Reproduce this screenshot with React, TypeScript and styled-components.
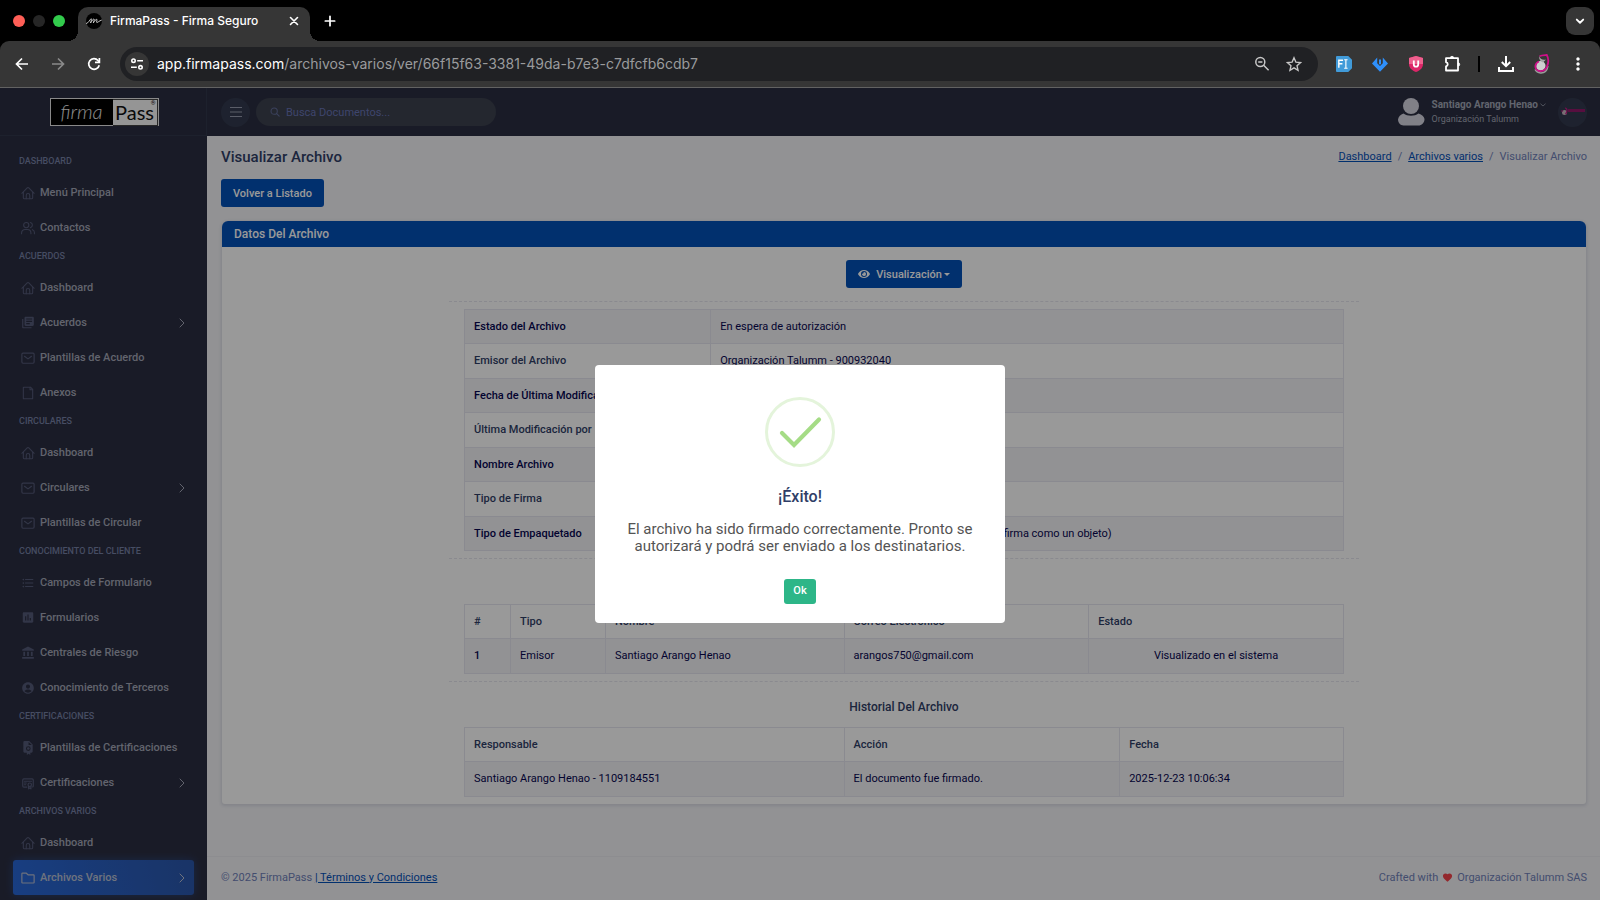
import React from 'react';
import styled, { createGlobalStyle } from 'styled-components';
import {
  MdAccountBalance,
  MdAccountCircle,
  MdAssessment,
  MdFavorite,
  MdFormatListBulleted,
  MdLibraryBooks,
  MdMoreVert,
} from 'react-icons/md';
import { FaEye } from 'react-icons/fa';
import { TbCertificate } from 'react-icons/tb';

const GlobalStyle = createGlobalStyle`
  *, *::before, *::after { box-sizing: border-box; }
  body { margin: 0; background: #000; }
  #root { font-family: Roboto, "Liberation Sans", sans-serif; }
  button, input { font: inherit; }
  button { cursor: pointer; }
`;

/* ---------- stroke icons ---------- */

type StrokeProps = { size?: number; width?: number; children: React.ReactNode };

const Stroke = ({ size = 14, width = 1.5, children }: StrokeProps) => (
  <svg
    width={size}
    height={size}
    viewBox="0 0 24 24"
    fill="none"
    stroke="currentColor"
    strokeWidth={width}
    strokeLinecap="round"
    strokeLinejoin="round"
    aria-hidden="true"
  >
    {children}
  </svg>
);

const HomeIcon = () => (
  <Stroke width={1.8}>
    <path d="M1.5 12.5L10.6 3.4a2 2 0 012.8 0l9.1 9.1" />
    <path d="M4 10.5V20a2 2 0 002 2h12a2 2 0 002-2v-9.500" />
    <path d="M9 22v-6a3 3 0 016 0v6" />
  </Stroke>
);
const UsersIcon = () => (
  <Stroke width={1.8}>
    <circle cx="9" cy="7" r="4.500" />
    <path d="M1 22v-1.500a6 6 0 016-6h4a6 6 0 016 6V22" />
    <path d="M16 2.600a4.500 4.500 0 010 8.800M19.500 14.800a5 5 0 013.500 4.800V22" />
  </Stroke>
);
const MailIcon = () => (
  <Stroke width={2}>
    <rect x="1.500" y="3.500" width="21" height="17.500" rx="2" />
    <path d="M6 9l6 4.500L18 9" />
  </Stroke>
);
const PageIcon = () => (
  <Stroke width={1.8}>
    <path d="M4 21.400V2.600A.6.600 0 014.600 2h11.700L20 5.800v15.600a.6.600 0 01-.6.600H4.600a.6.600 0 01-.6-.6z" />
    <path d="M15.500 2v4.500H20" />
  </Stroke>
);
const FolderIcon = () => (
  <Stroke width={2}>
    <path d="M1.500 19.500v-15a1 1 0 011-1h6.200L12 6.500h9.500a1 1 0 011 1v12a1 1 0 01-1 1h-19a1 1 0 01-1-1z" />
  </Stroke>
);
const CertFileIcon = () => (
  <svg width="14" height="14" viewBox="0 0 24 24" fill="currentColor" aria-hidden="true">
    <path
      fillRule="evenodd"
      d="M6 0h8l6 6v12a2 2 0 01-2 2h-2v4l-3-2-3 2v-4H6a2 2 0 01-2-2V2a2 2 0 012-2zm7 1.500V7h5.500zM12.500 9a4 4 0 100 8 4 4 0 000-8z"
    />
    <circle cx="12.500" cy="13" r="2.200" />
  </svg>
);
const ChevronRight = () => (
  <Stroke size={12} width={2}>
    <path d="M8 4l8 8-8 8" />
  </Stroke>
);

/* ---------- browser chrome ---------- */

const Window = styled.div`
  min-height: 100vh;
  display: flex;
  flex-direction: column;
  background: #000;
`;

const TabStrip = styled.div`
  height: 41px;
  display: flex;
  align-items: flex-end;
  padding: 0 6px 0 13px;
`;

const Lights = styled.div`
  display: flex;
  gap: 8px;
  height: 41px;
  align-items: center;
  margin-right: 13px;
`;

const Light = styled.span<{ $color: string }>`
  width: 12px;
  height: 12px;
  border-radius: 50%;
  background: ${(p) => p.$color};
`;

const Tab = styled.div`
  position: relative;
  width: 232px;
  height: 34px;
  display: flex;
  align-items: center;
  padding: 0 8px 6px 8px;
  border-radius: 10px 10px 0 0;
  background: #363636;
  color: #fff;
  font: 500 12px/16px Inter, "Liberation Sans", sans-serif;

  &::before,
  &::after {
    content: '';
    position: absolute;
    bottom: 0;
    width: 10px;
    height: 10px;
  }
  &::before {
    right: 100%;
    background: radial-gradient(circle at 0 0, transparent 10px, #363636 10px);
  }
  &::after {
    left: 100%;
    background: radial-gradient(circle at 100% 0, transparent 10px, #363636 10px);
  }
`;

const TabTitle = styled.span`
  flex: 1;
  margin-left: 8px;
  white-space: nowrap;
`;

const PlainButton = styled.button`
  display: inline-flex;
  align-items: center;
  justify-content: center;
  width: 28px;
  height: 28px;
  padding: 0;
  border: 0;
  background: transparent;
  color: #fff;
`;

const CloseTab = styled(PlainButton)`
  width: 16px;
  height: 16px;
`;

const NewTab = styled(PlainButton)`
  margin: 0 auto 6px 6px;
`;

const TabSearch = styled(PlainButton)`
  margin-bottom: 6px;
  border-radius: 9px;
  background: #363636;
`;

const Toolbar = styled.div`
  height: 47px;
  display: flex;
  align-items: center;
  padding: 0 8px 0 8px;
  background: #363636;
  border-bottom: 1px solid #626262;
  border-radius: 9px 9px 0 0;
`;

const NavButton = styled(PlainButton)<{ $dim?: boolean }>`
  margin-right: 8px;
  color: ${(p) => (p.$dim ? '#8a8a8a' : '#fff')};
`;

const Omnibox = styled.div`
  flex: 1;
  display: flex;
  align-items: center;
  height: 34px;
  margin: 0 12px 0 4px;
  padding: 0 10px 0 5px;
  border-radius: 17px;
  background: #202124;
`;

const SiteInfo = styled(PlainButton)`
  width: 24px;
  height: 24px;
  border-radius: 12px;
  background: #363636;
`;

const Url = styled.div`
  flex: 1;
  margin-left: 8px;
  color: #9a9b9d;
  font: 400 14px/20px Inter, "Liberation Sans", sans-serif;
  white-space: nowrap;

  b {
    color: #fff;
    font-weight: 400;
  }
`;

const OmniButton = styled(PlainButton)`
  margin-left: 4px;
  color: #c7c7c7;
`;

const Extensions = styled.div`
  display: flex;
  align-items: center;
  gap: 8px;
`;

const Divider = styled.span`
  width: 2px;
  height: 16px;
  margin: 0 4px;
  background: #000;
`;

const BrowserChrome = () => (
  <>
    <TabStrip>
      <Lights>
        <Light $color="#ff5f57" />
        <Light $color="#262626" />
        <Light $color="#32cb4c" />
      </Lights>
      <Tab>
        <svg width="16" height="16" viewBox="0 0 16 16" aria-hidden="true">
          <circle cx="8" cy="8" r="8" fill="#000" />
          <path
            d="M.5 10.500C2.500 10 4 6.500 5 5.800c1-.4 0 3.200-.5 4.200 1-2 2.700-4.200 3.500-4 .8.200-.5 3-.6 3.800C8.500 8 10 6 10.800 6.300c.8.400-.8 2.900 0 3.200.8.200 2.600-1.800 4.500-2.300"
            fill="none"
            stroke="#ddd"
            strokeWidth=".9"
            strokeLinecap="round"
          />
        </svg>
        <TabTitle>FirmaPass - Firma Seguro</TabTitle>
        <CloseTab aria-label="Cerrar pestaña">
          <Stroke size={14} width={2.8}>
            <path d="M6 6l12 12M18 6L6 18" />
          </Stroke>
        </CloseTab>
      </Tab>
      <NewTab aria-label="Nueva pestaña">
        <Stroke size={16} width={2.600}>
          <path d="M12 5v14M5 12h14" />
        </Stroke>
      </NewTab>
      <TabSearch aria-label="Buscar pestañas">
        <Stroke size={14} width={3.200}>
          <path d="M6.500 9.500l5.500 5.500 5.500-5.500" />
        </Stroke>
      </TabSearch>
    </TabStrip>
    <Toolbar>
      <NavButton aria-label="Atrás">
        <svg width="16" height="16" viewBox="0 0 16 16" fill="none" stroke="currentColor" strokeWidth="1.700" aria-hidden="true">
          <path d="M14 8H3M8 2.500L2.500 8 8 13.500" />
        </svg>
      </NavButton>
      <NavButton aria-label="Adelante" $dim>
        <svg width="16" height="16" viewBox="0 0 16 16" fill="none" stroke="currentColor" strokeWidth="1.700" aria-hidden="true">
          <path d="M2 8h11M8 2.500L13.500 8 8 13.500" />
        </svg>
      </NavButton>
      <NavButton aria-label="Recargar">
        <svg width="16" height="16" viewBox="0 0 16 16" fill="none" stroke="currentColor" strokeWidth="1.700" aria-hidden="true">
          <path d="M13.200 9.200A5.300 5.300 0 1112 4.500L13.500 6" />
          <path d="M13.400 2v4.400H9" />
        </svg>
      </NavButton>
      <Omnibox>
        <SiteInfo aria-label="Información del sitio">
          <svg width="14" height="14" viewBox="0 0 14 14" fill="none" stroke="#fff" strokeWidth="1.600" aria-hidden="true">
            <circle cx="3.500" cy="3.700" r="1.700" />
            <path d="M7.200 3.700H13M1 10.300h5.800" />
            <circle cx="10.500" cy="10.300" r="1.700" />
          </svg>
        </SiteInfo>
        <Url>
          <b>app.firmapass.com</b>/archivos-varios/ver/66f15f63-3381-49da-b7e3-c7dfcfb6cdb7
        </Url>
        <OmniButton aria-label="Zoom">
          <svg width="16" height="16" viewBox="0 0 16 16" fill="none" stroke="currentColor" strokeWidth="1.500" aria-hidden="true">
            <circle cx="6.300" cy="6" r="4.500" />
            <path d="M9.600 9.300l5 5M4.200 6h4.200" />
          </svg>
        </OmniButton>
        <OmniButton aria-label="Añadir a favoritos">
          <svg width="16" height="16" viewBox="0 0 24 24" fill="none" stroke="currentColor" strokeWidth="2" aria-hidden="true">
            <path d="M12 2.600l2.800 6.600 7.100.6-5.400 4.700 1.600 7L12 17.800l-6.100 3.700 1.600-7L2.100 9.800l7.100-.6z" />
          </svg>
        </OmniButton>
      </Omnibox>
      <Extensions>
        <PlainButton aria-label="Extensión de fuentes">
          <svg width="16" height="16" viewBox="0 0 17 17" aria-hidden="true">
            <path d="M1 0h12l4 4v9l-4 4H1a1 1 0 01-1-1V1a1 1 0 011-1z" fill="#419bd9" />
            <path d="M3 12.500v-8h4.500M3 8.300h3.800" fill="none" stroke="#fff" strokeWidth="1.500" />
            <path d="M8.700 4h3.600M8.700 13h3.600M10.500 4v9" fill="none" stroke="#fff" strokeWidth="1.200" />
          </svg>
        </PlainButton>
        <PlainButton aria-label="Extensión de descarga">
          <svg width="16" height="15" viewBox="0 0 16 15" fill="#2f90fb" aria-hidden="true">
            <path d="M5.200.5v5.700L8 9l2.800-2.800V.5L16 6.500 8 14.700 0 6.500z" />
            <path d="M7 2.500h2v4.300L8 7.800l-1-1z" />
          </svg>
        </PlainButton>
        <PlainButton aria-label="Extensión de seguridad">
          <svg width="14" height="16" viewBox="0 0 14 16" aria-hidden="true">
            <path d="M7 0l7 2v6c0 4-3 6.500-7 8-4-1.500-7-4-7-8V2z" fill="#dc2668" />
            <path d="M7 0l7 2v6H0V2z" fill="#ee5f8d" />
            <path d="M4.800 4.500v4a2.200 2.200 0 004.400 0v-4" fill="none" stroke="#fff" strokeWidth="1.800" />
          </svg>
        </PlainButton>
        <PlainButton aria-label="Extensiones">
          <svg width="18" height="18" viewBox="0 0 18 18" fill="none" stroke="#fff" strokeWidth="1.800" strokeLinejoin="round" aria-hidden="true">
            <path d="M3 3.200h12v12.300H3v-4a2.200 2.200 0 000-4.300z" />
            <path d="M7.300 3a1.700 1.700 0 013.400 0zM15 7.700a1.700 1.700 0 010 3.400z" fill="#fff" strokeWidth=".8" />
          </svg>
        </PlainButton>
        <Divider />
        <PlainButton aria-label="Descargas">
          <svg width="18" height="18" viewBox="0 0 18 18" fill="none" stroke="#fff" strokeWidth="2" aria-hidden="true">
            <path d="M9 1v10M4.800 7L9 11.200 13.200 7M2 12v4h14v-4" />
          </svg>
        </PlainButton>
        <PlainButton aria-label="Perfil">
          <svg width="16" height="20" viewBox="0 0 16 20" fill="none" aria-hidden="true">
            <path d="M14 12c-1 5-4 7.200-7.500 7-2.500-.2-4.500-1.500-5.500-3.500" stroke="#9b9b9b" strokeWidth="1.400" />
            <path d="M6.500 7c3 0 5 2.200 5 4.800S9.300 16.500 6.600 16.500 2 14.500 2.200 11.800C2.400 9 4 7 6.500 7z" fill="#cfcfcf" />
            <path d="M5.500 2c0 3 3.500 4.500 6.500 3.500L9 8.500C6.500 7.500 4.500 5 5.500 2z" fill="#a7a7a7" />
            <path
              d="M5.500 2.200C8 1 11 1.200 12.800 1c1.700 3 1.700 8 .2 11.500-1.500 3.500-4.500 5-7.500 4.500-3-.6-4.500-3-4-5.500.4-2 1.700-3.500 3.500-4"
              stroke="#d0108a"
              strokeWidth="1.800"
            />
          </svg>
        </PlainButton>
        <PlainButton aria-label="Menú del navegador">
          <MdMoreVert size={20} />
        </PlainButton>
      </Extensions>
    </Toolbar>
  </>
);

/* ---------- application shell ---------- */

const AppArea = styled.div`
  position: relative;
  flex: 1;
  display: grid;
  grid-template-columns: 207px minmax(0, 1fr);
  background: #f3f3f7;
`;

const Sidebar = styled.aside`
  display: flex;
  flex-direction: column;
  background: #2b2e41;
  color: #a3a7b7;
`;

const Brand = styled.a`
  height: 48px;
  display: flex;
  align-items: center;
  justify-content: center;
  padding-left: 2px;
  border-bottom: 1px solid #31374b;
  border-right: 1px solid #31374b;
  text-decoration: none;
`;

const BrandBox = styled.span`
  position: relative;
  display: grid;
  grid-template-columns: 62px 45px;
  height: 28px;
  border: 1px solid #e4e4e4;
  background: #000;
`;

const BrandScript = styled.span`
  color: #eee;
  font: italic 300 20px/24px Lato, "Liberation Serif", serif;
  text-align: center;
`;

const BrandPlain = styled.span`
  border: 1px solid #444;
  border-left: 0;
  background: #f8f8f8;
  color: #111;
  font: 400 20px/25px Lato, "Liberation Sans", sans-serif;
  text-align: center;
`;

const BrandMark = styled.span`
  position: absolute;
  top: 1px;
  right: 2px;
  color: #111;
  font-size: 6px;
  line-height: 6px;
`;

const Nav = styled.nav`
  display: flex;
  flex-direction: column;
  padding: 14px 13px 1px;
`;

const NavHeading = styled.h2`
  height: 25px;
  margin: 0;
  padding: 0 6px;
  color: #7680a5;
  font-size: 9px;
  font-weight: 500;
  line-height: 23px;
  text-transform: uppercase;
`;

const NavItem = styled.a<{ $active?: boolean }>`
  height: 35px;
  display: flex;
  align-items: center;
  gap: 5px;
  padding: 0 6px 0 8px;
  border-radius: 3px;
  color: ${(p) => (p.$active ? '#b9c0d2' : 'inherit')};
  background: ${(p) => (p.$active ? 'linear-gradient(75deg, #2868d8, #2b57ab)' : 'none')};
  box-shadow: ${(p) => (p.$active ? '0 0 10px rgba(42, 107, 224, 0.35)' : 'none')};
  font-size: 11px;
  font-weight: 500;
  line-height: 16px;
  text-decoration: none;
`;

const NavIcon = styled.span<{ $active?: boolean }>`
  display: inline-flex;
  width: 14px;
  color: ${(p) => (p.$active ? '#b4bbcf' : '#545a78')};
`;

const NavLabel = styled.span`
  flex: 1;
  white-space: nowrap;
`;

type Item = { label: string; icon: React.ReactNode; more?: boolean; active?: boolean };

const groups: { title: string; items: Item[] }[] = [
  {
    title: 'Dashboard',
    items: [
      { label: 'Menú Principal', icon: <HomeIcon /> },
      { label: 'Contactos', icon: <UsersIcon /> },
    ],
  },
  {
    title: 'Acuerdos',
    items: [
      { label: 'Dashboard', icon: <HomeIcon /> },
      { label: 'Acuerdos', icon: <MdLibraryBooks size={15} />, more: true },
      { label: 'Plantillas de Acuerdo', icon: <MailIcon /> },
      { label: 'Anexos', icon: <PageIcon /> },
    ],
  },
  {
    title: 'Circulares',
    items: [
      { label: 'Dashboard', icon: <HomeIcon /> },
      { label: 'Circulares', icon: <MailIcon />, more: true },
      { label: 'Plantillas de Circular', icon: <MailIcon /> },
    ],
  },
  {
    title: 'Conocimiento del cliente',
    items: [
      { label: 'Campos de Formulario', icon: <MdFormatListBulleted size={14} /> },
      { label: 'Formularios', icon: <MdAssessment size={15} /> },
      { label: 'Centrales de Riesgo', icon: <MdAccountBalance size={14} /> },
      { label: 'Conocimiento de Terceros', icon: <MdAccountCircle size={14} /> },
    ],
  },
  {
    title: 'Certificaciones',
    items: [
      { label: 'Plantillas de Certificaciones', icon: <CertFileIcon /> },
      { label: 'Certificaciones', icon: <TbCertificate size={14} />, more: true },
    ],
  },
  {
    title: 'Archivos varios',
    items: [
      { label: 'Dashboard', icon: <HomeIcon /> },
      { label: 'Archivos Varios', icon: <FolderIcon />, more: true, active: true },
    ],
  },
];

const Main = styled.div`
  display: flex;
  flex-direction: column;
`;

const Topbar = styled.header`
  height: 48px;
  display: flex;
  align-items: center;
  padding: 0 13px 0 14px;
  background: #2b2e41;
`;

const RoundButton = styled.button`
  display: inline-flex;
  align-items: center;
  justify-content: center;
  width: 29px;
  height: 29px;
  padding: 0;
  border: 0;
  border-radius: 50%;
  background: #333a4f;
  color: #979cad;
`;

const SearchBox = styled.label`
  display: flex;
  align-items: center;
  gap: 6px;
  width: 240px;
  height: 28px;
  margin: 0 auto 0 6px;
  padding: 0 14px;
  border-radius: 14px;
  background: #3c414f;
  color: #626c98;
`;

const SearchInput = styled.input`
  flex: 1;
  min-width: 0;
  padding: 0;
  border: 0;
  outline: 0;
  background: transparent;
  color: #fff;
  font-size: 11px;

  &::placeholder {
    color: #6874b4;
    opacity: 1;
  }
`;

const UserButton = styled.button`
  display: flex;
  align-items: center;
  gap: 7px;
  margin-right: 12px;
  padding: 0;
  border: 0;
  background: transparent;
  color: #a3a8b8;
  text-align: left;
`;

const UserText = styled.span`
  display: flex;
  flex-direction: column;
  font-size: 9px;
  line-height: 14px;
`;

const UserName = styled.span`
  display: flex;
  align-items: center;
  gap: 2px;
  font-size: 10px;
  font-weight: 700;
`;

const Content = styled.main`
  flex: 1;
  display: flex;
  flex-direction: column;
  align-items: flex-start;
  padding: 10px 13px 0 14px;
`;

const TitleRow = styled.div`
  align-self: stretch;
  display: flex;
  align-items: center;
  justify-content: space-between;
  margin-bottom: 11px;
`;

const PageTitle = styled.h1`
  margin: 0;
  color: #303e67;
  font-size: 15px;
  font-weight: 500;
  line-height: 22px;
`;

const Crumbs = styled.ol`
  display: flex;
  margin: 0;
  padding: 0;
  list-style: none;
  color: #7081b9;
  font-size: 11px;
  line-height: 22px;

  li + li::before {
    content: '/';
    padding: 0 6px;
  }
`;

const Link = styled.a`
  color: #0350b7;
  text-decoration: underline;
`;

const BlueButton = styled.button`
  display: inline-flex;
  align-items: center;
  gap: 6px;
  height: 28px;
  padding: 0 12px;
  border: 0;
  border-radius: 3px;
  background: #0350b7;
  color: #fff;
  font-size: 11px;
  font-weight: 500;
`;

const Caret = styled.span`
  margin-left: -4px;
  border: 3px solid transparent;
  border-top-color: currentColor;
  border-bottom: 0;
`;

const Card = styled.section`
  align-self: stretch;
  margin: 14px 1px 0;
  border-radius: 6px 6px 3px 3px;
  background: #fff;
  box-shadow: 0 1px 3px 1px rgba(48, 62, 103, 0.12);
  overflow: hidden;
`;

const CardHeader = styled.h2`
  margin: 0;
  padding: 0 12px;
  background: #0350b7;
  color: #fff;
  font-size: 12px;
  font-weight: 500;
  line-height: 26px;
`;

const CardBody = styled.div`
  display: flex;
  flex-direction: column;
  align-items: center;
  padding: 13px 13px 7px;
`;

const Section = styled.section<{ $top?: boolean }>`
  width: 68%;
  margin-top: ${(p) => (p.$top ? '13px' : '7px')};
  padding: ${(p) => (p.$top ? '7px 15px 0' : '15px 15px 0')};
  border-top: 1px dashed #e6e6ee;
`;

const SectionTitle = styled.h3`
  margin: 0 0 10px;
  color: #303e67;
  font-size: 12px;
  font-weight: 500;
  line-height: 20px;
  text-align: center;
`;

const Table = styled.table`
  width: 100%;
  table-layout: fixed;
  border-collapse: collapse;
  color: #060650;
  font-size: 11px;
  line-height: 14px;
  text-align: left;

  th,
  td {
    height: 34px;
    padding: 0 9px;
    border: 1px solid #e6e6f0;
    font-weight: 400;
  }
  th {
    font-weight: 500;
  }
  thead th,
  tbody tr:nth-child(even) th {
    color: #303e67;
  }
  tbody tr:nth-child(odd) {
    background: #f3f3f7;
  }
  tbody tr:nth-child(even) > *,
  thead + tbody > tr > * {
    height: 35px;
  }
`;

const CenterCell = styled.td`
  text-align: center;
`;

const Footer = styled.footer`
  display: flex;
  align-items: center;
  justify-content: space-between;
  height: 44px;
  padding: 0 13px 2px 14px;
  border-top: 1px solid #ebebf1;
  color: #7081b9;
  font-size: 11px;
  line-height: 16px;
`;

const Credit = styled.span`
  display: inline-flex;
  align-items: center;
  gap: 4px;
`;

/* ---------- alert ---------- */

const Backdrop = styled.div`
  position: absolute;
  inset: 0;
  display: flex;
  align-items: center;
  justify-content: center;
  background: rgba(0, 0, 0, 0.4);
`;

const Alert = styled.div`
  display: flex;
  flex-direction: column;
  align-items: center;
  width: 410px;
  padding: 32px 24px 19px;
  border-radius: 4px;
  background: #fff;
  text-align: center;
`;

const AlertTitle = styled.h2`
  margin: 19px 0 13px;
  color: #303e67;
  font-size: 16px;
  font-weight: 500;
  line-height: 22px;
`;

const AlertText = styled.p`
  margin: 0 0 24px;
  color: #545454;
  font-size: 15px;
  line-height: 17px;
`;

const OkButton = styled.button`
  width: 32px;
  height: 25px;
  padding: 0 0 2px;
  border: 0;
  border-radius: 3px;
  background: #2db688;
  color: #fff;
  font-size: 11px;
  font-weight: 500;
`;

const details: [string, string][] = [
  ['Estado del Archivo', 'En espera de autorización'],
  ['Emisor del Archivo', 'Organización Talumm - 900932040'],
  ['Fecha de Última Modificación', ''],
  ['Última Modificación por', ''],
  ['Nombre Archivo', ''],
  ['Tipo de Firma', ''],
  ['Tipo de Empaquetado', 'Enveloping: (El documento original se incluye dentro de la firma como un objeto)'],
];

export default function App() {
  return (
    <Window>
      <GlobalStyle />
      <BrowserChrome />
      <AppArea>
        <Sidebar>
          <Brand href="#inicio" aria-label="FirmaPass">
            <BrandBox>
              <BrandScript>firma</BrandScript>
              <BrandPlain>Pass</BrandPlain>
              <BrandMark>®</BrandMark>
            </BrandBox>
          </Brand>
          <Nav>
            {groups.map((group) => (
              <React.Fragment key={group.title}>
                <NavHeading>{group.title}</NavHeading>
                {group.items.map((item) => (
                  <NavItem key={item.label} href="#menu" $active={item.active}>
                    <NavIcon $active={item.active}>{item.icon}</NavIcon>
                    <NavLabel>{item.label}</NavLabel>
                    {item.more && <ChevronRight />}
                  </NavItem>
                ))}
              </React.Fragment>
            ))}
          </Nav>
        </Sidebar>
        <Main>
          <Topbar>
            <RoundButton aria-label="Alternar menú">
              <svg width="12" height="12" viewBox="0 0 12 12" stroke="currentColor" aria-hidden="true">
                <path d="M0 1.500h12M0 6h12M0 10.500h12" />
              </svg>
            </RoundButton>
            <SearchBox>
              <Stroke size={10} width={2.600}>
                <circle cx="10" cy="10" r="7.500" />
                <path d="M16 16l6 6" />
              </Stroke>
              <SearchInput type="search" placeholder="Busca Documentos..." aria-label="Busca Documentos" />
            </SearchBox>
            <UserButton>
              <svg width="27" height="28" viewBox="0 0 27 28" fill="#d5d5e2" aria-hidden="true">
                <circle cx="13" cy="8" r="8" />
                <path d="M5.500 15.500c4 3 11 3 15 0 3.500 1 5.500 3 6 5.500 0 4-3 6.500-6 6.500h-15c-3 0-5.500-3-5.500-6 .5-3 2.500-5 5.500-6z" />
              </svg>
              <UserText>
                <UserName>
                  Santiago Arango Henao
                  <Stroke size={6} width={3}>
                    <path d="M3 8l9 8 9-8" />
                  </Stroke>
                </UserName>
                <span>Organización Talumm</span>
              </UserText>
            </UserButton>
            <RoundButton aria-label="Organización">
              <svg width="26" height="10" viewBox="0 0 26 10" aria-hidden="true">
                <circle cx="4.500" cy="5.500" r="2.500" fill="#c9b7c2" />
                <path d="M5 1c2.500 0 2.500 4 .5 6M1 4h2" fill="none" stroke="#c01783" strokeWidth="1.200" />
                <path d="M8 3.500h17" stroke="#92186a" strokeWidth="3" />
              </svg>
            </RoundButton>
          </Topbar>
          <Content>
            <TitleRow>
              <PageTitle>Visualizar Archivo</PageTitle>
              <Crumbs>
                <li>
                  <Link href="#dashboard">Dashboard</Link>
                </li>
                <li>
                  <Link href="#archivos">Archivos varios</Link>
                </li>
                <li>Visualizar Archivo</li>
              </Crumbs>
            </TitleRow>
            <BlueButton>Volver a Listado</BlueButton>
            <Card>
              <CardHeader>Datos Del Archivo</CardHeader>
              <CardBody>
                <BlueButton>
                  <FaEye size={12} />
                  Visualización
                  <Caret />
                </BlueButton>
                <Section $top>
                  <Table>
                    <colgroup>
                      <col style={{ width: '28%' }} />
                      <col />
                    </colgroup>
                    <tbody>
                      {details.map(([name, value]) => (
                        <tr key={name}>
                          <th scope="row">{name}</th>
                          <td>{value}</td>
                        </tr>
                      ))}
                    </tbody>
                  </Table>
                </Section>
                <Section>
                  <SectionTitle>Firmantes Del Archivo</SectionTitle>
                  <Table>
                    <colgroup>
                      {[46, 95, 239, 245, 255].map((w) => (
                        <col key={w} style={{ width: `${w / 8.8}%` }} />
                      ))}
                    </colgroup>
                    <thead>
                      <tr>
                        <th scope="col">#</th>
                        <th scope="col">Tipo</th>
                        <th scope="col">Nombre</th>
                        <th scope="col">Correo Electrónico</th>
                        <th scope="col">Estado</th>
                      </tr>
                    </thead>
                    <tbody>
                      <tr>
                        <th scope="row">1</th>
                        <td>Emisor</td>
                        <td>Santiago Arango Henao</td>
                        <td>arangos750@gmail.com</td>
                        <CenterCell>Visualizado en el sistema</CenterCell>
                      </tr>
                    </tbody>
                  </Table>
                </Section>
                <Section>
                  <SectionTitle>Historial Del Archivo</SectionTitle>
                  <Table>
                    <colgroup>
                      {[380, 276, 224].map((w) => (
                        <col key={w} style={{ width: `${w / 8.8}%` }} />
                      ))}
                    </colgroup>
                    <thead>
                      <tr>
                        <th scope="col">Responsable</th>
                        <th scope="col">Acción</th>
                        <th scope="col">Fecha</th>
                      </tr>
                    </thead>
                    <tbody>
                      <tr>
                        <td>Santiago Arango Henao - 1109184551</td>
                        <td>El documento fue firmado.</td>
                        <td>2025-12-23 10:06:34</td>
                      </tr>
                    </tbody>
                  </Table>
                </Section>
              </CardBody>
            </Card>
          </Content>
          <Footer>
            <span>
              © 2025 FirmaPass <Link href="#terminos">| Términos y Condiciones</Link>
            </span>
            <Credit>
              Crafted with <MdFavorite size={11} color="#f5444c" /> Organización Talumm SAS
            </Credit>
          </Footer>
        </Main>
        <Backdrop>
          <Alert role="alertdialog" aria-labelledby="alert-title" aria-describedby="alert-text">
            <svg width="70" height="70" viewBox="0 0 70 70" fill="none" aria-hidden="true">
              <circle cx="35" cy="35" r="33.500" stroke="#e4f4db" strokeWidth="3" />
              <path d="M17 36l12 12 25-25.500" stroke="#a5dc86" strokeWidth="4.200" strokeLinecap="round" />
            </svg>
            <AlertTitle id="alert-title">¡Éxito!</AlertTitle>
            <AlertText id="alert-text">
              El archivo ha sido firmado correctamente. Pronto se autorizará y podrá ser enviado a los destinatarios.
            </AlertText>
            <OkButton>Ok</OkButton>
          </Alert>
        </Backdrop>
      </AppArea>
    </Window>
  );
}
